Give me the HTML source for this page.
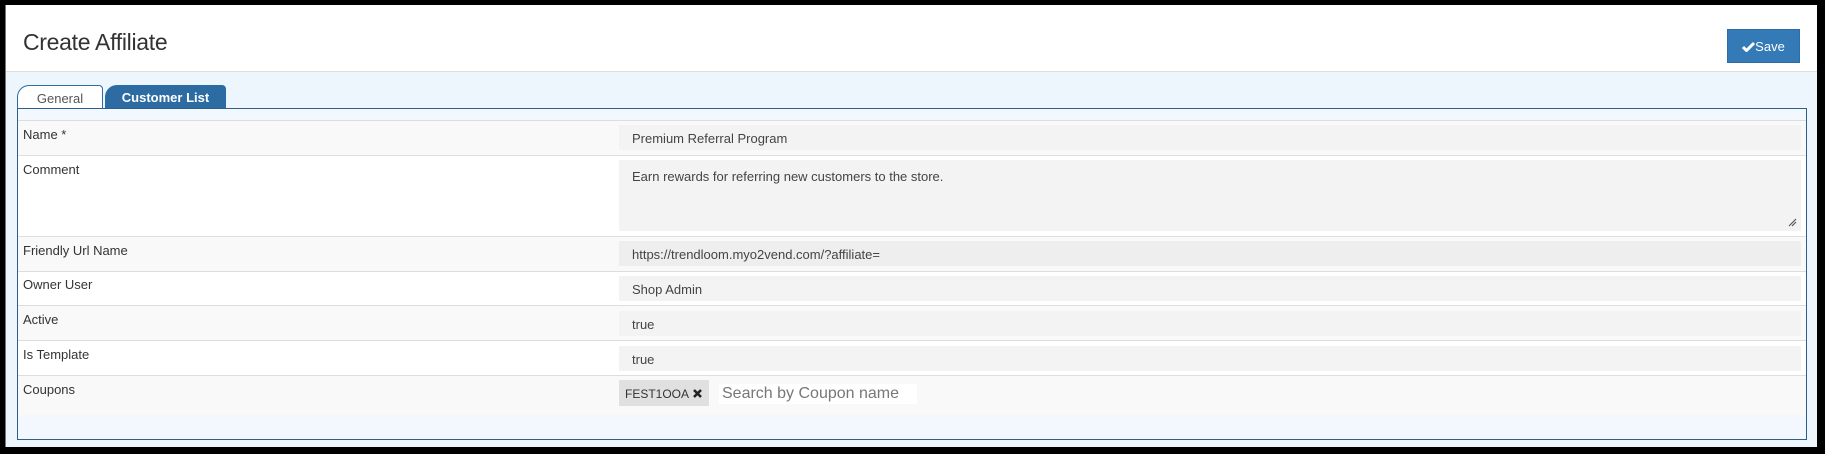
<!DOCTYPE html>
<html><head><meta charset="utf-8"><style>
*{box-sizing:border-box;margin:0;padding:0}
body{width:1825px;height:454px;background:#000;position:relative;overflow:hidden;font-family:"Liberation Sans",sans-serif;color:#333}
.a{position:absolute}
.frame{left:6px;top:5px;width:1811px;height:442px;background:#eef6fd}
.hdr{left:6px;top:5px;width:1811px;height:67px;background:#fff;border-bottom:1px solid #ddd}
.lbl{position:absolute;left:23px;font-size:13px;color:#333}
.inp{position:absolute;left:619px;width:1182px;height:25px;background:#f3f3f3;font-size:13px;color:#444;padding:6px 0 0 13px;white-space:nowrap}
.row{position:absolute;left:18px;width:1788px;border-top:1px solid #ddd}
</style></head><body>
<div class="a" style="left:5px;top:5px;width:1px;height:442px;background:#777"></div>
<div class="a frame"></div>
<div class="a hdr"></div>
<div class="a" style="left:23px;top:29px;font-size:23px;color:#333;letter-spacing:-0.3px">Create Affiliate</div>
<div class="a" style="left:1727px;top:29px;width:73px;height:34px;background:#337ab7;border:1px solid #2e6da4;color:#fff;font-size:13px;padding-top:9px;text-align:center;white-space:nowrap"><svg width="13" height="11" viewBox="0 0 13 11" style="vertical-align:-1px"><path d="M1 6L4.5 9.5L12 2" stroke="#fff" stroke-width="3" fill="none"/></svg>Save</div>
<!-- tabs -->
<div class="a" style="left:17px;top:85px;width:86px;height:24px;background:#fff;border:1px solid #2d6ca2;border-bottom:none;border-radius:12px 4px 0 0;font-size:13px;color:#555;text-align:center;padding-top:5px">General</div>
<div class="a" style="left:105px;top:85px;width:121px;height:24px;background:#2d6ca2;border-radius:12px 4px 0 0;font-size:13px;color:#fff;text-align:center;padding-top:5px;font-weight:bold">Customer List</div>
<!-- panel -->
<div class="a" style="left:17px;top:108px;width:1790px;height:332px;border:1px solid #2d5f8d;background:#f2f8fe"></div>
<div class="row" style="top:120px;height:35px;background:#f9f9f9"></div>
<div class="row" style="top:155px;height:81px;background:#fff"></div>
<div class="row" style="top:236px;height:35px;background:#f9f9f9"></div>
<div class="row" style="top:271px;height:34px;background:#fff"></div>
<div class="row" style="top:305px;height:35px;background:#f9f9f9"></div>
<div class="row" style="top:340px;height:35px;background:#fff"></div>
<div class="row" style="top:375px;height:40px;background:#f9f9f9"></div>
<div class="lbl" style="top:127px">Name *</div>
<div class="lbl" style="top:162px">Comment</div>
<div class="lbl" style="top:243px">Friendly Url Name</div>
<div class="lbl" style="top:277px">Owner User</div>
<div class="lbl" style="top:312px">Active</div>
<div class="lbl" style="top:347px">Is Template</div>
<div class="lbl" style="top:382px">Coupons</div>
<div class="inp" style="top:125px">Premium Referral Program</div>
<div class="inp" style="top:160px;height:71px;padding-top:9px">Earn rewards for referring new customers to the store.
<svg class="a" style="right:4px;bottom:4px" width="9" height="9" viewBox="0 0 9 9"><path d="M1 8L8 1M4 8L8 4" stroke="#555" stroke-width="1.2"/></svg></div>
<div class="inp" style="top:241px;background:#eee">https://trendloom.myo2vend.com/?affiliate=</div>
<div class="inp" style="top:276px">Shop Admin</div>
<div class="inp" style="top:311px">true</div>
<div class="inp" style="top:346px">true</div>
<div class="a" style="left:619px;top:380px;width:90px;height:26px;background:#e0e0e0;font-size:12px;color:#333;padding:7px 0 0 6px;white-space:nowrap">FEST1OOA <svg width="11" height="11" viewBox="0 0 11 11" style="vertical-align:-1px"><path d="M2 2L9 9M9 2L2 9" stroke="#222" stroke-width="2.6"/></svg></div>
<div class="a" style="left:719px;top:384px;width:198px;height:20px;background:#fff;font-size:16px;color:#777;padding:1px 0 0 3px;white-space:nowrap">Search by Coupon name</div>
</body></html>
